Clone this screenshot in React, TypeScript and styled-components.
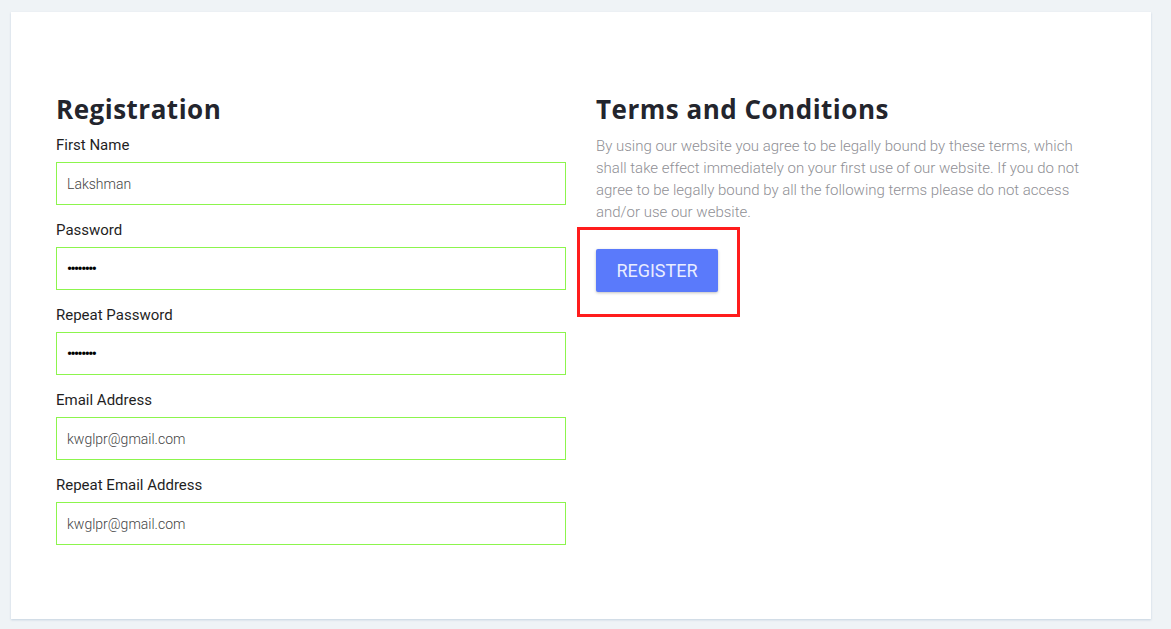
import React from "react";
import styled, { createGlobalStyle } from "styled-components";

const Global = createGlobalStyle`
  html, body { margin: 0; padding: 0; }
  body {
    background: #eff3f6;
    font-family: Roboto, "Liberation Sans", Arial, sans-serif;
  }
  * { box-sizing: border-box; }
`;

const Page = styled.div`
  padding: 12px 20px 10px 11px;
`;

const Card = styled.div`
  background: #fff;
  box-shadow: 0 1px 2px rgba(120, 150, 180, 0.35);
  padding: 79px 45px 0 45px;
  display: grid;
  grid-template-columns: 510px 510px;
  align-items: start;
  column-gap: 30px;
  height: 607px;
`;

const Column = styled.div`
  display: flex;
  flex-direction: column;
  align-items: flex-start;
`;

const Heading = styled.h2`
  margin: 0 0 8px 0;
  font-family: "Open Sans", "Liberation Sans", sans-serif;
  font-weight: 700;
  font-size: 26px;
  line-height: 36px;
  letter-spacing: 0.5px;
  color: #23252d;
`;

const Field = styled.div`
  display: flex;
  flex-direction: column;
  width: 100%;
  margin-bottom: 15px;
`;

const Label = styled.label`
  font-size: 15px;
  line-height: 20px;
  color: #1f1f1f;
  margin-bottom: 7px;
`;

const Input = styled.input<{ $secret?: boolean }>`
  width: 100%;
  height: 43px;
  border: 1px solid #8cf54d;
  border-radius: 0;
  outline: none;
  padding: 0 10px;
  font-family: Roboto, "Liberation Sans", sans-serif;
  font-weight: ${(p) => (p.$secret ? 700 : 300)};
  font-size: 14px;
  color: ${(p) => (p.$secret ? "#000" : "#444")};
  background: #fff;
  letter-spacing: ${(p) => (p.$secret ? "-1.5px" : "0")};
`;

const Paragraph = styled.p`
  margin: 0;
  font-size: 15px;
  font-weight: 300;
  line-height: 22px;
  color: #8f8f95;
`;

const Highlight = styled.div`
  position: relative;
  margin-top: 26px;
  &::after {
    content: "";
    position: absolute;
    left: -19px;
    right: -22px;
    top: -22px;
    bottom: -25px;
    border: 3px solid #ff1c1c;
    pointer-events: none;
  }
`;

const Button = styled.button`
  width: 122px;
  height: 43px;
  border: none;
  border-radius: 2px;
  background: #5a7afb;
  color: #e9edff;
  font-family: Roboto, "Liberation Sans", sans-serif;
  font-weight: 400;
  font-size: 18px;
  padding: 0;
  box-shadow: 0 1px 3px rgba(0, 0, 0, 0.25);
  cursor: pointer;
`;

const fields = [
  { label: "First Name", value: "Lakshman", type: "text" },
  { label: "Password", value: "12345678", type: "password" },
  { label: "Repeat Password", value: "12345678", type: "password" },
  { label: "Email Address", value: "kwglpr@gmail.com", type: "text" },
  { label: "Repeat Email Address", value: "kwglpr@gmail.com", type: "text" },
];

export default function App() {
  return (
    <>
      <Global />
      <Page>
        <Card>
          <Column>
            <Heading>Registration</Heading>
            {fields.map((f) => (
              <Field key={f.label}>
                <Label>{f.label}</Label>
                <Input
                  type={f.type}
                  defaultValue={f.value}
                  $secret={f.type === "password"}
                  readOnly
                />
              </Field>
            ))}
          </Column>
          <Column>
            <Heading>Terms and Conditions</Heading>
            <Paragraph>
              By using our website you agree to be legally bound by these terms, which shall take
              effect immediately on your first use of our website. If you do not agree to be legally
              bound by all the following terms please do not access and/or use our website.
            </Paragraph>
            <Highlight>
              <Button>REGISTER</Button>
            </Highlight>
          </Column>
        </Card>
      </Page>
    </>
  );
}
